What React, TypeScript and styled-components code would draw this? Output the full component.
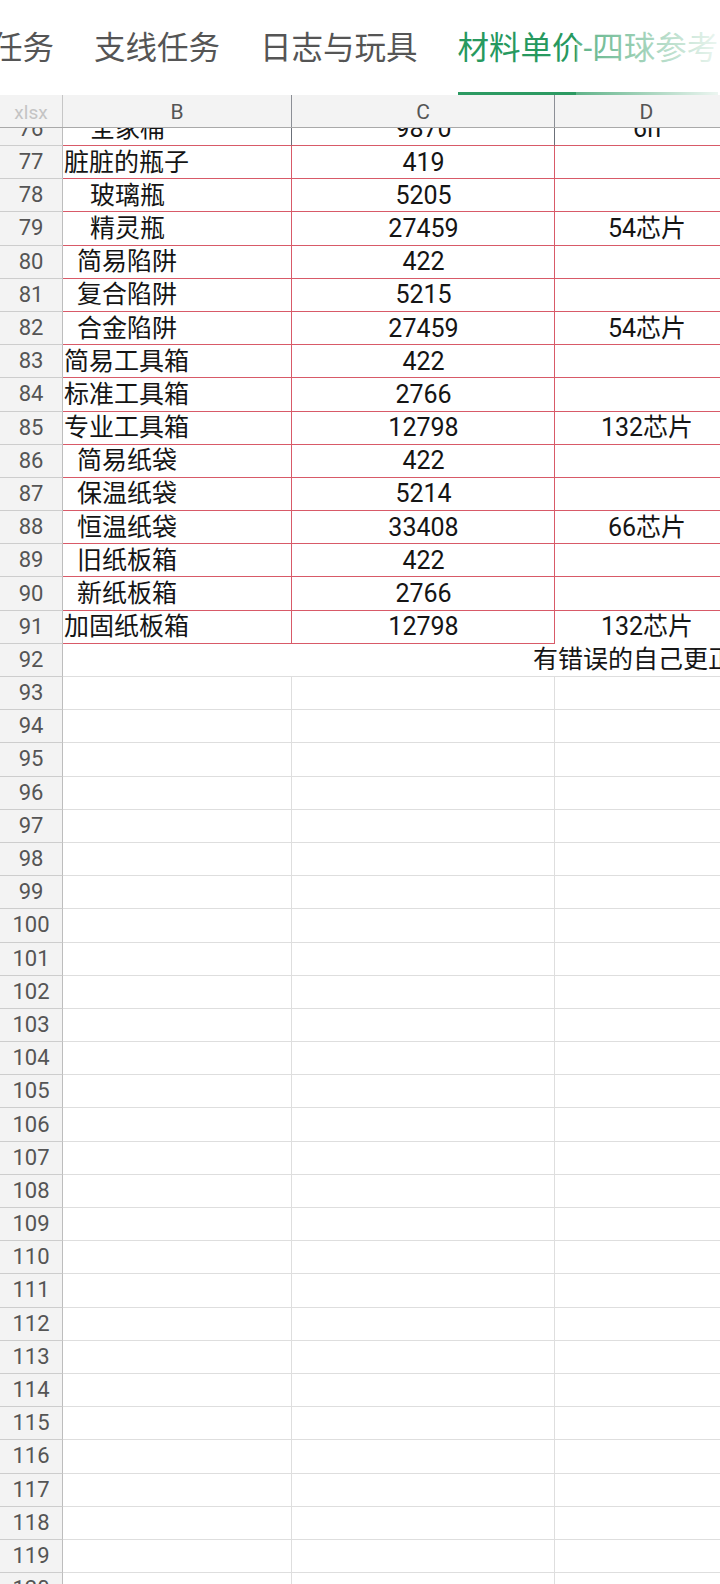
import React from 'react';
import styled, { createGlobalStyle } from 'styled-components';

const GlobalStyle = createGlobalStyle`
  html, body {
    margin: 0;
    padding: 0;
    background: #ffffff;
  }
  body {
    width: 720px;
    height: 1584px;
    overflow: hidden;
    font-family: Roboto, 'Noto Sans CJK SC', sans-serif;
  }
`;

const ROW_H = 33.2;
const COLS = '63px 229px 263px 184px 232px 232px';
const RED = '#d85a68';
const GRID = '#dedede';
const DARK = '#6b6f78';

const Page = styled.div`
  width: 720px;
  height: 1584px;
  overflow: hidden;
  display: flex;
  flex-direction: column;
`;

const TabBar = styled.div`
  position: relative;
  height: 95px;
  flex-shrink: 0;
  overflow: hidden;
`;

const TabStrip = styled.div`
  display: flex;
  gap: 40px;
  height: 100%;
  margin-left: -72px;
  white-space: nowrap;
`;

const Tab = styled.div<{ $active?: boolean }>`
  position: relative;
  display: flex;
  align-items: center;
  height: 100%;
  padding-top: 3px;
  box-sizing: border-box;
  font-size: 31.5px;
  line-height: 1.2;
  color: ${({ $active }) => ($active ? '#27995f' : '#555555')};

  &::after {
    content: '';
    display: ${({ $active }) => ($active ? 'block' : 'none')};
    position: absolute;
    left: 0;
    right: 0;
    bottom: 0;
    height: 3px;
    background: #2c9a62;
  }
`;

// fades the tabs that run off the right edge
const FadeEdge = styled.div`
  position: absolute;
  top: 0;
  bottom: 0;
  left: 576px;
  right: 0;
  background: linear-gradient(
    to right,
    rgba(255, 255, 255, 0.25) 0%,
    rgba(255, 255, 255, 0.55) 45%,
    rgba(255, 255, 255, 0.92) 100%
  );
  pointer-events: none;
`;

const Sheet = styled.div`
  flex: 1;
  overflow: hidden;
  display: flex;
  flex-direction: column;
`;

const HeaderRow = styled.div`
  display: grid;
  grid-template-columns: ${COLS};
  width: 1203px;
  height: 32px;
  flex-shrink: 0;
  background: #f3f3f3;
  border-bottom: 1px solid #a9a9a9;
  position: relative;
  z-index: 1;
`;

const HeaderCell = styled.div<{ $corner?: boolean }>`
  display: flex;
  align-items: center;
  justify-content: center;
  border-right: 1px solid ${({ $corner }) => ($corner ? '#c6c6c6' : '#8c8f96')};
  font-size: ${({ $corner }) => ($corner ? '19px' : '21px')};
  line-height: 1;
  color: ${({ $corner }) => ($corner ? '#c4c4c4' : '#555555')};
  padding-top: 2px;
`;

const Viewport = styled.div`
  flex: 1;
  overflow: hidden;
`;

const Rows = styled.div`
  margin-top: -15.2px;
  width: 1203px;
`;

const Row = styled.div`
  display: grid;
  grid-template-columns: ${COLS};
  height: ${ROW_H}px;
`;

const RowNum = styled.div`
  display: flex;
  align-items: center;
  justify-content: center;
  background: #f3f3f3;
  color: #555555;
  font-size: 22px;
  line-height: 1;
  border-right: 1px solid #bdbdbd;
  border-bottom: 1px solid #cdcdcd;
  box-sizing: border-box;
`;

const Cell = styled.div<{
  $center?: boolean;
  $indent?: number;
  $right?: string;
  $bottom?: string;
  $span?: boolean;
}>`
  display: flex;
  align-items: center;
  justify-content: ${({ $center }) => ($center ? 'center' : 'flex-start')};
  padding-left: ${({ $indent }) => ($indent ?? 0) + 1}px;
  box-sizing: border-box;
  border-right: 1px solid ${({ $right }) => $right ?? GRID};
  border-bottom: 1px solid ${({ $bottom }) => $bottom ?? GRID};
  grid-column: ${({ $span }) => ($span ? '2 / -1' : 'auto')};
  font-size: 25px;
  line-height: 1;
  color: #151515;
  white-space: nowrap;
  overflow: hidden;
`;

type Item = { n: number; name: string; indent: number; price: string; chips?: string };

const items: Item[] = [
  { n: 76, name: '全家桶', indent: 26, price: '9870', chips: '6h' },
  { n: 77, name: '脏脏的瓶子', indent: 0, price: '419' },
  { n: 78, name: '玻璃瓶', indent: 26, price: '5205' },
  { n: 79, name: '精灵瓶', indent: 26, price: '27459', chips: '54芯片' },
  { n: 80, name: '简易陷阱', indent: 13, price: '422' },
  { n: 81, name: '复合陷阱', indent: 13, price: '5215' },
  { n: 82, name: '合金陷阱', indent: 13, price: '27459', chips: '54芯片' },
  { n: 83, name: '简易工具箱', indent: 0, price: '422' },
  { n: 84, name: '标准工具箱', indent: 0, price: '2766' },
  { n: 85, name: '专业工具箱', indent: 0, price: '12798', chips: '132芯片' },
  { n: 86, name: '简易纸袋', indent: 13, price: '422' },
  { n: 87, name: '保温纸袋', indent: 13, price: '5214' },
  { n: 88, name: '恒温纸袋', indent: 13, price: '33408', chips: '66芯片' },
  { n: 89, name: '旧纸板箱', indent: 13, price: '422' },
  { n: 90, name: '新纸板箱', indent: 13, price: '2766' },
  { n: 91, name: '加固纸板箱', indent: 0, price: '12798', chips: '132芯片' },
];

const emptyRows = Array.from({ length: 28 }, (_, i) => 93 + i);

const App: React.FC = () => {
  return (
    <>
      <GlobalStyle />
      <Page>
        <TabBar>
          <TabStrip>
            <Tab>主线任务</Tab>
            <Tab>支线任务</Tab>
            <Tab>日志与玩具</Tab>
            <Tab $active>材料单价-四球参考</Tab>
          </TabStrip>
          <FadeEdge />
        </TabBar>

        <Sheet>
          <HeaderRow>
            <HeaderCell $corner>xlsx</HeaderCell>
            <HeaderCell>B</HeaderCell>
            <HeaderCell>C</HeaderCell>
            <HeaderCell>D</HeaderCell>
            <HeaderCell>E</HeaderCell>
            <HeaderCell>F</HeaderCell>
          </HeaderRow>

          <Viewport>
            <Rows>
              {items.map((it) => {
                const first = it.n === 76;
                const last = it.n === 91;
                const v = first ? DARK : RED;
                return (
                  <Row key={it.n}>
                    <RowNum>{it.n}</RowNum>
                    <Cell $indent={it.indent} $right={v} $bottom={RED}>
                      {it.name}
                    </Cell>
                    <Cell $center $right={v} $bottom={RED}>
                      {it.price}
                    </Cell>
                    <Cell $center $bottom={last ? 'transparent' : RED}>
                      {it.chips}
                    </Cell>
                    <Cell $bottom={last ? 'transparent' : RED} />
                    <Cell $bottom={last ? 'transparent' : RED} />
                  </Row>
                );
              })}

              <Row>
                <RowNum>92</RowNum>
                <Cell $span $center>
                  有错误的自己更正
                </Cell>
              </Row>

              {emptyRows.map((n) => (
                <Row key={n}>
                  <RowNum>{n}</RowNum>
                  <Cell />
                  <Cell />
                  <Cell />
                  <Cell />
                  <Cell />
                </Row>
              ))}
            </Rows>
          </Viewport>
        </Sheet>
      </Page>
    </>
  );
};

export default App;
